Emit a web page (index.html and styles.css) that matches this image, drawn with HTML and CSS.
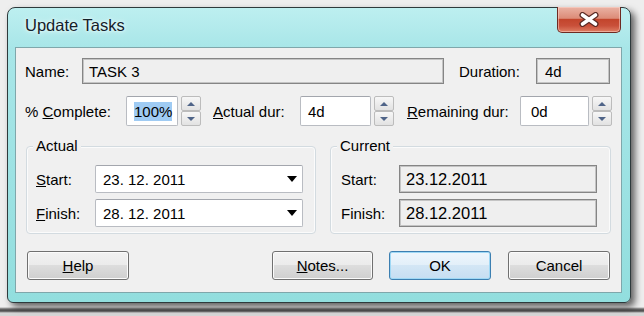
FILE: index.html
```html
<!DOCTYPE html>
<html lang="en">

<head>
    <meta charset="UTF-8">
    <meta name="viewport" content="width=device-width, initial-scale=1.0">
    <title>Update Tasks</title>
    <link rel="stylesheet" href="styles.css">
</head>

<body>
    <div class="window">
        <div class="titlebar">
            <span class="title">Update Tasks</span>
            <div class="close">
                <svg width="24" height="15" viewBox="0 0 24 15">
                    <path d="M5.5 3 L18.5 12 M18.5 3 L5.5 12" stroke="#5a2a24" stroke-width="6" stroke-linecap="round" fill="none"/>
                    <path d="M5.5 3 L18.5 12 M18.5 3 L5.5 12" stroke="#ffffff" stroke-width="3.6" stroke-linecap="round" fill="none"/>
                </svg>
            </div>
        </div>

        <div class="content">
            <div class="row row-name">
                <label class="lbl lbl-name">Name:</label>
                <div class="field ro name-field">TASK 3</div>
                <label class="lbl lbl-duration">Duration:</label>
                <div class="field ro dur-field">4d</div>
            </div>

            <div class="row row-spin">
                <label class="lbl lbl-pct">% <u>C</u>omplete:</label>
                <div class="field edit pct-field"><span class="selected">100%</span></div>
                <div class="spinner">
                    <span class="spin-btn"><span class="arrow-up"></span></span>
                    <span class="spin-btn"><span class="arrow-down"></span></span>
                </div>
                <label class="lbl lbl-actdur"><u>A</u>ctual dur:</label>
                <div class="field edit actdur-field">4d</div>
                <div class="spinner">
                    <span class="spin-btn"><span class="arrow-up"></span></span>
                    <span class="spin-btn"><span class="arrow-down"></span></span>
                </div>
                <label class="lbl lbl-remdur"><u>R</u>emaining dur:</label>
                <div class="field edit remdur-field">0d</div>
                <div class="spinner">
                    <span class="spin-btn"><span class="arrow-up"></span></span>
                    <span class="spin-btn"><span class="arrow-down"></span></span>
                </div>
            </div>

            <div class="groups">
                <div class="group group-actual">
                    <span class="legend">Actual</span>
                    <div class="group-row">
                        <label class="lbl group-lbl"><u>S</u>tart:</label>
                        <div class="field edit combo">
                            <span class="date">23. 12. 2011</span>
                            <span class="drop"></span>
                        </div>
                    </div>
                    <div class="group-row">
                        <label class="lbl group-lbl"><u>F</u>inish:</label>
                        <div class="field edit combo">
                            <span class="date">28. 12. 2011</span>
                            <span class="drop"></span>
                        </div>
                    </div>
                </div>

                <div class="group group-current">
                    <span class="legend">Current</span>
                    <div class="group-row">
                        <label class="lbl group-lbl">Start:</label>
                        <div class="field ro cur-field">23.12.2011</div>
                    </div>
                    <div class="group-row">
                        <label class="lbl group-lbl">Finish:</label>
                        <div class="field ro cur-field">28.12.2011</div>
                    </div>
                </div>
            </div>

            <div class="buttons">
                <button class="btn btn-help"><u>H</u>elp</button>
                <button class="btn btn-notes"><u>N</u>otes...</button>
                <button class="btn btn-ok">OK</button>
                <button class="btn btn-cancel">Cancel</button>
            </div>
        </div>
    </div>
</body>

</html>
```

FILE: styles.css
```css
body {
    margin: 0;
    padding: 7px 0 0 7px;
    height: 316px;
    box-sizing: border-box;
    overflow: hidden;
    font-family: "Liberation Sans", Arial, sans-serif;
    font-size: 15px;
    color: #000;
    background: linear-gradient(to bottom, #eeeeee 0, #eeeeee 307px, #6a6a6a 309px, #4a4a4a 311px, #d6d6d6 313px);
}

.window {
    width: 624px;
    height: 296px;
    box-sizing: border-box;
    border: 1px solid #2e3a3c;
    border-radius: 8px 8px 6px 6px;
    background: linear-gradient(to bottom, #bdeff0 0, #a8e6e8 40px, #92dede 100%);
    box-shadow: 4px 4px 7px rgba(0, 0, 0, 0.6);
    padding: 0 8px 9px 7px;
    display: flex;
    flex-direction: column;
}

.titlebar {
    height: 39px;
    position: relative;
    display: flex;
    align-items: center;
}

.title {
    font-size: 16.5px;
    margin-left: 10px;
    margin-top: -4px;
    color: #14202a;
    text-shadow: 0 0 6px #eaffff, 0 0 3px #ffffff;
}

.close {
    position: absolute;
    right: 1px;
    top: -1px;
    width: 64px;
    height: 26px;
    box-sizing: border-box;
    border: 1px solid #6e2a22;
    border-top: none;
    border-radius: 0 0 5px 5px;
    background: linear-gradient(to bottom, #eab2a4 0, #dc8c78 45%, #c3452c 50%, #c9503a 75%, #df7e64 100%);
    box-shadow: inset 0 0 0 1px rgba(255, 220, 210, 0.5);
    display: flex;
    align-items: center;
    justify-content: center;
}

.content {
    flex: 1;
    background: #f0f0f0;
    border: 1px solid #7fa7ab;
    padding: 10px 0 0 9px;
}

.row {
    display: flex;
    align-items: center;
}

.row-name {
    height: 26px;
}

.row-spin {
    height: 30px;
    margin-top: 12px;
}

.lbl {
    white-space: nowrap;
}

.lbl-name {
    width: 57px;
}

.lbl-duration {
    margin-left: 15px;
    width: 77px;
}

.lbl-pct {
    width: 101px;
}

.lbl-actdur {
    margin-left: 12px;
    width: 87px;
}

.lbl-remdur {
    margin-left: 13px;
    width: 113px;
}

.field {
    box-sizing: border-box;
    display: flex;
    align-items: center;
    white-space: nowrap;
}

.ro {
    border: 1px solid #858585;
    box-shadow: inset 0 0 0 1px #c4c4c4;
    background: #efefef;
    padding-left: 6px;
}

.edit {
    background: #fff;
    border: 1px solid #b9bcc2;
    border-top-color: #a3a6ad;
    border-radius: 2px;
    padding-left: 7px;
}

.name-field {
    width: 362px;
    height: 26px;
}

.dur-field {
    width: 74px;
    height: 26px;
    padding-left: 8px;
}

.pct-field {
    width: 52px;
    height: 30px;
}

.selected {
    background: #9fcbf3;
    padding: 1px 0;
}

.actdur-field {
    width: 71px;
    height: 30px;
}

.remdur-field {
    width: 69px;
    height: 30px;
    padding-left: 10px;
}

.spinner {
    margin-left: 3px;
    width: 20px;
    height: 30px;
    display: flex;
    flex-direction: column;
}

.spin-btn {
    flex: 1;
    box-sizing: border-box;
    border: 1px solid #bcbcbc;
    border-radius: 2px;
    background: linear-gradient(to bottom, #f7f7f7, #e2e2e2);
    display: flex;
    align-items: center;
    justify-content: center;
}

.arrow-up {
    width: 0;
    height: 0;
    border-left: 4px solid transparent;
    border-right: 4px solid transparent;
    border-bottom: 4px solid #4f6488;
}

.arrow-down {
    width: 0;
    height: 0;
    border-left: 4px solid transparent;
    border-right: 4px solid transparent;
    border-top: 4px solid #4f6488;
}

.groups {
    display: flex;
    margin-top: 20px;
    margin-left: 1px;
}

.group {
    position: relative;
    box-sizing: border-box;
    height: 88px;
    border: 1px solid #d3dbe0;
    border-radius: 4px;
    box-shadow: inset 0 0 0 1px #fbfbfb;
    padding: 18px 0 0 9px;
}

.group-actual {
    width: 290px;
}

.group-current {
    width: 281px;
    margin-left: 14px;
    padding-left: 10px;
}

.legend {
    position: absolute;
    top: -10px;
    left: 6px;
    padding: 0 3px;
    background: #f0f0f0;
}

.group-row {
    display: flex;
    align-items: center;
    height: 28px;
    margin-bottom: 6px;
}

.group-lbl {
    width: 59px;
}

.combo {
    width: 208px;
    height: 28px;
    justify-content: space-between;
    padding-right: 5px;
}

.date {
    font-size: 15px;
}

.drop {
    width: 0;
    height: 0;
    border-left: 5px solid transparent;
    border-right: 5px solid transparent;
    border-top: 6px solid #000;
}

.cur-field {
    width: 198px;
    height: 28px;
    font-size: 16.5px;
}

.group-current .group-lbl {
    width: 58px;
}

.buttons {
    display: flex;
    margin-top: 17px;
    margin-left: 2px;
}

.btn {
    height: 29px;
    width: 102px;
    box-sizing: border-box;
    font-family: "Liberation Sans", Arial, sans-serif;
    font-size: 15px;
    color: #000;
    border: 1px solid #707070;
    border-radius: 3px;
    background: linear-gradient(to bottom, #f2f2f2 0, #ebebeb 50%, #dddddd 50%, #cfcfcf 100%);
    box-shadow: inset 0 0 0 1px #fbfbfb;
    padding: 0;
}

.btn-notes {
    width: 101px;
    margin-left: 143px;
}

.btn-ok {
    margin-left: 16px;
    border-color: #3c7fb1;
    background: linear-gradient(to bottom, #eef6fc 0, #e2eff9 50%, #d3e6f5 50%, #c6def2 100%);
    box-shadow: inset 0 0 0 1px #9fd8f5;
}

.btn-cancel {
    margin-left: 17px;
}
```
